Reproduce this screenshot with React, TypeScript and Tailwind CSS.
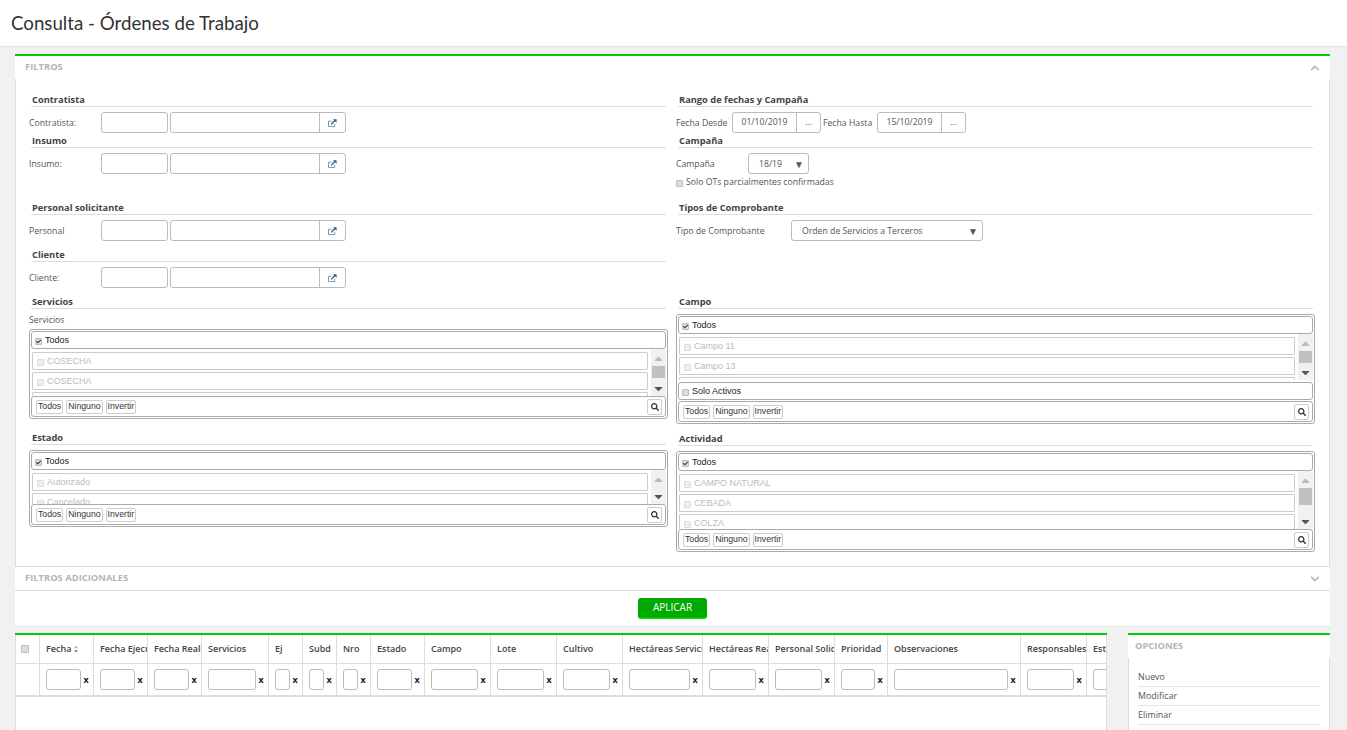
import React from "react";
import { FaChevronDown, FaChevronUp, FaSearch, FaCheck, FaCaretUp, FaCaretDown } from "react-icons/fa";

const open = "font-['Open_Sans',sans-serif]";
const arial = "font-['Liberation_Sans',Arial,sans-serif]";

function Title({ children, className = "" }: { children: React.ReactNode; className?: string }) {
  return (
    <div className={`mx-[2px] h-[14px] border-b border-[#ddd] pl-[1px] text-[9.3px] font-bold leading-[14px] text-[#444] ${className}`}>
      {children}
    </div>
  );
}

function ShareIcon() {
  return (
    <svg width="9" height="8" viewBox="0 0 10 9" fill="none">
      <path d="M7.5 5.5V8.5H0.5V2.5H4" stroke="#6b8da3" strokeWidth="1" />
      <path d="M3.5 6L7.5 2" stroke="#2f566f" strokeWidth="1.4" />
      <path d="M5.5 0.2H9.6V4.3Z" fill="#2f566f" />
    </svg>
  );
}

function Lookup({ label, className = "" }: { label: string; className?: string }) {
  return (
    <div className={`flex h-[21px] items-center text-[8.7px] text-[#555] ${className}`}>
      <span className="w-[72px] pt-[2px]">{label}</span>
      <span className="h-[21px] w-[67px] rounded-[3px] border border-[#bbb] bg-white" />
      <span className="ml-[2px] flex h-[21px] w-[176px] rounded-[3px] border border-[#bbb] bg-white">
        <span className="flex-1 border-r border-[#bbb]" />
        <span className="flex w-[25px] items-center justify-center">
          <ShareIcon />
        </span>
      </span>
    </div>
  );
}

function Check({ on = false, dim = false }: { on?: boolean; dim?: boolean }) {
  return (
    <span
      className={`relative mr-[3px] inline-flex h-[7px] w-[7px] shrink-0 items-center justify-center rounded-[1px] border ${
        dim ? "border-[#ddd] bg-[#eee]" : "border-[#bbb] bg-[#ddd]"
      }`}
    >
      {on && <FaCheck size={5} className="text-[#333]" />}
    </span>
  );
}

function Item({ text }: { text: string }) {
  return (
    <div className="mb-[2px] flex h-[18px] shrink-0 items-center rounded-[1px] border border-[#ccc] pl-[4px] pt-[2px] text-[9px] text-[#bbb]">
      <Check dim />
      {text}
    </div>
  );
}

function Row({ children }: { children: React.ReactNode }) {
  return (
    <div className="mx-[1px] flex h-[18px] shrink-0 items-center rounded-[3px] border border-[#aaa] pl-[3px] pt-[2px] text-[9px] text-[#222]">
      {children}
    </div>
  );
}

function Multi({
  items,
  listH,
  thumbH,
  extra,
}: {
  items: string[];
  listH: number;
  thumbH: number;
  extra?: boolean;
}) {
  return (
    <div className={`rounded-[3px] border border-[#aaa] py-[1px] ${arial}`}>
      <Row>
        <Check on />
        Todos
      </Row>
      <div className="mx-[1px] flex" style={{ height: listH }}>
        <div className="mr-[3px] flex-1 overflow-hidden pl-[1px] pt-[3px]">
          {items.map((t, i) => (
            <Item key={i} text={t} />
          ))}
        </div>
        <div className="flex w-[15px] flex-col items-center bg-[#f1f1f1] pt-[1px]" style={{ height: listH }}>
          <span className="flex h-[16px] shrink-0 items-center text-[#bbb]">
            <FaCaretUp size={13} />
          </span>
          {thumbH > 0 && <span className="w-[13px] shrink-0 bg-[#c1c1c1]" style={{ height: thumbH }} />}
          <span className="mt-auto flex h-[16px] shrink-0 items-center text-[#555]">
            <FaCaretDown size={13} />
          </span>
        </div>
      </div>
      {extra && (
        <div className="mb-[1px] mt-[2px]">
          <Row>
            <Check />
            Solo Activos
          </Row>
        </div>
      )}
      <div className="mx-[1px] flex h-[21px] items-center rounded-[3px] border border-[#aaa] pl-[4px] pr-[3px]">
        {["Todos", "Ninguno", "Invertir"].map((b) => (
          <span key={b} className="mr-[3px] flex h-[14px] items-center rounded-[2px] border border-[#ccc] px-[1px] pt-[1px] text-[8.7px] text-[#333]">
            {b}
          </span>
        ))}
        <span className="ml-auto flex h-[16px] w-[15px] items-center justify-center rounded-[2px] border border-[#ccc] text-[#234]">
          <FaSearch size={8} />
        </span>
      </div>
    </div>
  );
}

function Select({ value, className }: { value: string; className: string }) {
  return (
    <span className={`flex h-[21px] items-center rounded-[3px] border border-[#bbb] bg-white text-[8.7px] text-[#555] ${className}`}>
      <span className="flex-1 pt-[2px]">{value}</span>
      <span className="mr-[4px] text-[10px] leading-none text-[#555]">▼</span>
    </span>
  );
}

function DateBox({ value }: { value: string }) {
  return (
    <span className="flex h-[21px] w-[89px] rounded-[3px] border border-[#bbb] text-[8.7px] text-[#555]">
      <span className="flex w-[64px] items-center justify-center border-r border-[#bbb] pt-[1px]">{value}</span>
      <span className="flex flex-1 items-center justify-center pt-[1px]">...</span>
    </span>
  );
}

const cols: [string, number, string][] = [
  ["Fecha", 54, "sort"],
  ["Fecha Ejecución", 54, ""],
  ["Fecha Realización", 54, ""],
  ["Servicios", 67, ""],
  ["Ej", 34, ""],
  ["Subd", 34, ""],
  ["Nro", 34, ""],
  ["Estado", 54, ""],
  ["Campo", 66, ""],
  ["Lote", 66, ""],
  ["Cultivo", 66, ""],
  ["Hectáreas Servicio", 80, ""],
  ["Hectáreas Realizadas", 66, ""],
  ["Personal Solicitante", 66, ""],
  ["Prioridad", 53, ""],
  ["Observaciones", 133, ""],
  ["Responsables", 66, ""],
  ["Estado OT", 66, ""],
];

function Grid() {
  return (
    <div className="flex h-full w-[1092px] flex-col border-t-2 border-[#00d100] bg-white">
      <div className="h-full overflow-hidden border-x border-[#ddd]">
        <table className="table-fixed border-collapse" style={{ width: 23 + cols.reduce((a, c) => a + c[1], 0) }}>
          <colgroup>
            <col style={{ width: 23 }} />
            {cols.map((c) => (
              <col key={c[0]} style={{ width: c[1] }} />
            ))}
          </colgroup>
          <thead>
            <tr className="h-[28px] border-b border-[#ddd]">
              <th className="border-r border-[#ddd] p-0 align-middle">
                <span className="ml-[5px] block h-[8px] w-[8px] rounded-[1px] border border-[#bbb] bg-[#ddd]" />
              </th>
              {cols.map((c) => (
                <th key={c[0]} className="overflow-hidden whitespace-nowrap border-r border-[#ddd] p-0 pl-[6.5px] text-left text-[9px] font-semibold text-[#444]">
                  <span className="flex items-center overflow-hidden">
                    {c[0]}
                    {c[2] && (
                      <span className="ml-[2px] flex flex-col text-[#777]">
                        <FaCaretUp size={6} className="-mb-[2px] text-[#aaa]" />
                        <FaCaretDown size={6} />
                      </span>
                    )}
                  </span>
                </th>
              ))}
            </tr>
          </thead>
          <tbody>
            <tr className="h-[33px] border-b-2 border-[#ddd]">
              <td className="border-r border-[#ddd] p-0" />
              {cols.map((c) => (
                <td key={c[0]} className="overflow-hidden border-r border-[#ddd] p-0 pl-[6px]">
                  <span className="flex items-center">
                    <span className="h-[21px] shrink-0 rounded-[3px] border border-[#bbb]" style={{ width: c[1] - 19 }} />
                    <span className="ml-[3px] text-[9px] font-bold leading-none text-[#123]">x</span>
                  </span>
                </td>
              ))}
            </tr>
          </tbody>
        </table>
      </div>
    </div>
  );
}

export default function App() {
  return (
    <div className={`flex h-[730px] flex-col overflow-hidden bg-[#f1f1f1] ${open}`}>
      <header className="flex h-[47px] shrink-0 items-center border-b border-[#e5e5e5] bg-white pl-[11px] font-['Lato',sans-serif] text-[18.7px] text-[#333]">
        Consulta - Órdenes de Trabajo
      </header>

      <main className="mx-[15px] mt-[7px] w-[1315px] shrink-0 border-t-2 border-[#00d100]">
        <div className="flex h-[23px] items-center justify-between bg-white pl-[10px] pr-[10px] text-[9.4px] font-bold text-[#b5b5b5]">
          FILTROS
          <FaChevronUp size={10} className="text-[#aabbbb]" />
        </div>
        <div className="grid grid-cols-[639px_639px] gap-x-[8px] border-x border-b border-[#ddd] bg-white pb-[14px] pl-[13px] pt-[14px]">
          <div>
            <Title>Contratista</Title>
            <Lookup label="Contratista:" className="mt-[5px]" />
            <Title className="mt-[1px]">Insumo</Title>
            <Lookup label="Insumo:" className="mt-[5px]" />
            <Title className="mt-[27px]">Personal solicitante</Title>
            <Lookup label="Personal" className="mt-[5px]" />
            <Title className="mt-[7px]">Cliente</Title>
            <Lookup label="Cliente:" className="mt-[5px]" />
            <Title className="mt-[7px]">Servicios</Title>
            <div className="flex h-[20px] items-center pt-[3px] text-[8.7px] text-[#555]">Servicios</div>
            <Multi items={["COSECHA", "COSECHA", "COSECHA"]} listH={47} thumbH={12} />
            <Title className="mt-[12px]">Estado</Title>
            <div className="mt-[5px]">
              <Multi items={["Autorizado", "Cancelado"]} listH={34} thumbH={0} />
            </div>
          </div>
          <div>
            <Title>Rango de fechas y Campaña</Title>
            <div className="mt-[5px] flex h-[21px] items-center whitespace-nowrap text-[8.7px] text-[#555]">
              <span className="w-[56px] pt-[2px]">Fecha Desde</span>
              <DateBox value="01/10/2019" />
              <span className="w-[56px] pl-[2px] pt-[2px]">Fecha Hasta</span>
              <DateBox value="15/10/2019" />
            </div>
            <Title className="mt-[1px]">Campaña</Title>
            <div className="mt-[5px] flex h-[21px] items-center text-[8.7px] text-[#555]">
              <span className="w-[72px] pt-[2px]">Campaña</span>
              <Select value="18/19" className="w-[61px] pl-[10px]" />
            </div>
            <div className="mt-[1px] flex h-[14px] items-center pt-[2px] text-[8.7px] text-[#555]">
              <Check />
              Solo OTs parcialmentes confirmadas
            </div>
            <Title className="mt-[12px]">Tipos de Comprobante</Title>
            <div className="mt-[5px] flex h-[21px] items-center text-[8.7px] text-[#555]">
              <span className="w-[115px] pt-[2px]">Tipo de Comprobante</span>
              <Select value="Orden de Servicios a Terceros" className="w-[192px] pl-[10px]" />
            </div>
            <Title className="mt-[54px]">Campo</Title>
            <div className="mt-[5px]">
              <Multi items={["Campo 11", "Campo 13", "Campo 14"]} listH={46} thumbH={12} extra />
            </div>
            <Title className="mt-[8px]">Actividad</Title>
            <div className="mt-[5px]">
              <Multi items={["CAMPO NATURAL", "CEBADA", "COLZA"]} listH={58} thumbH={17} />
            </div>
          </div>
        </div>
        <div className="flex h-[24px] items-center justify-between border-b border-[#ddd] bg-white pl-[10px] pr-[10px] text-[9.4px] font-bold text-[#b5b5b5]">
          FILTROS ADICIONALES
          <FaChevronDown size={10} className="text-[#aabbbb]" />
        </div>
        <div className="flex h-[36px] items-center justify-center border-b border-[#e5e5e5] bg-white">
          <span className="flex h-[21px] w-[69px] items-center justify-center rounded-[3px] border-b-2 border-[#00d100] bg-[#00aa00] text-[10px] font-normal text-white">
            APLICAR
          </span>
        </div>
      </main>

      <section className="ml-[15px] mt-[6px] flex min-h-0 w-[1315px] flex-1 justify-between">
        <Grid />
        <aside className="flex w-[202px] flex-col border-t-2 border-[#00d100]">
          <div className="flex h-[23px] shrink-0 items-center bg-white pl-[7px] text-[9.4px] font-bold text-[#b5b5b5]">OPCIONES</div>
          <div className="flex-1 border-x border-[#ddd] bg-white px-[9px] pt-[10px] text-[8.9px] text-[#555]">
            {["Nuevo", "Modificar", "Eliminar"].map((t) => (
              <div key={t} className="flex h-[19px] items-center border-b border-[#e5e5e5]">
                {t}
              </div>
            ))}
          </div>
        </aside>
      </section>
    </div>
  );
}
